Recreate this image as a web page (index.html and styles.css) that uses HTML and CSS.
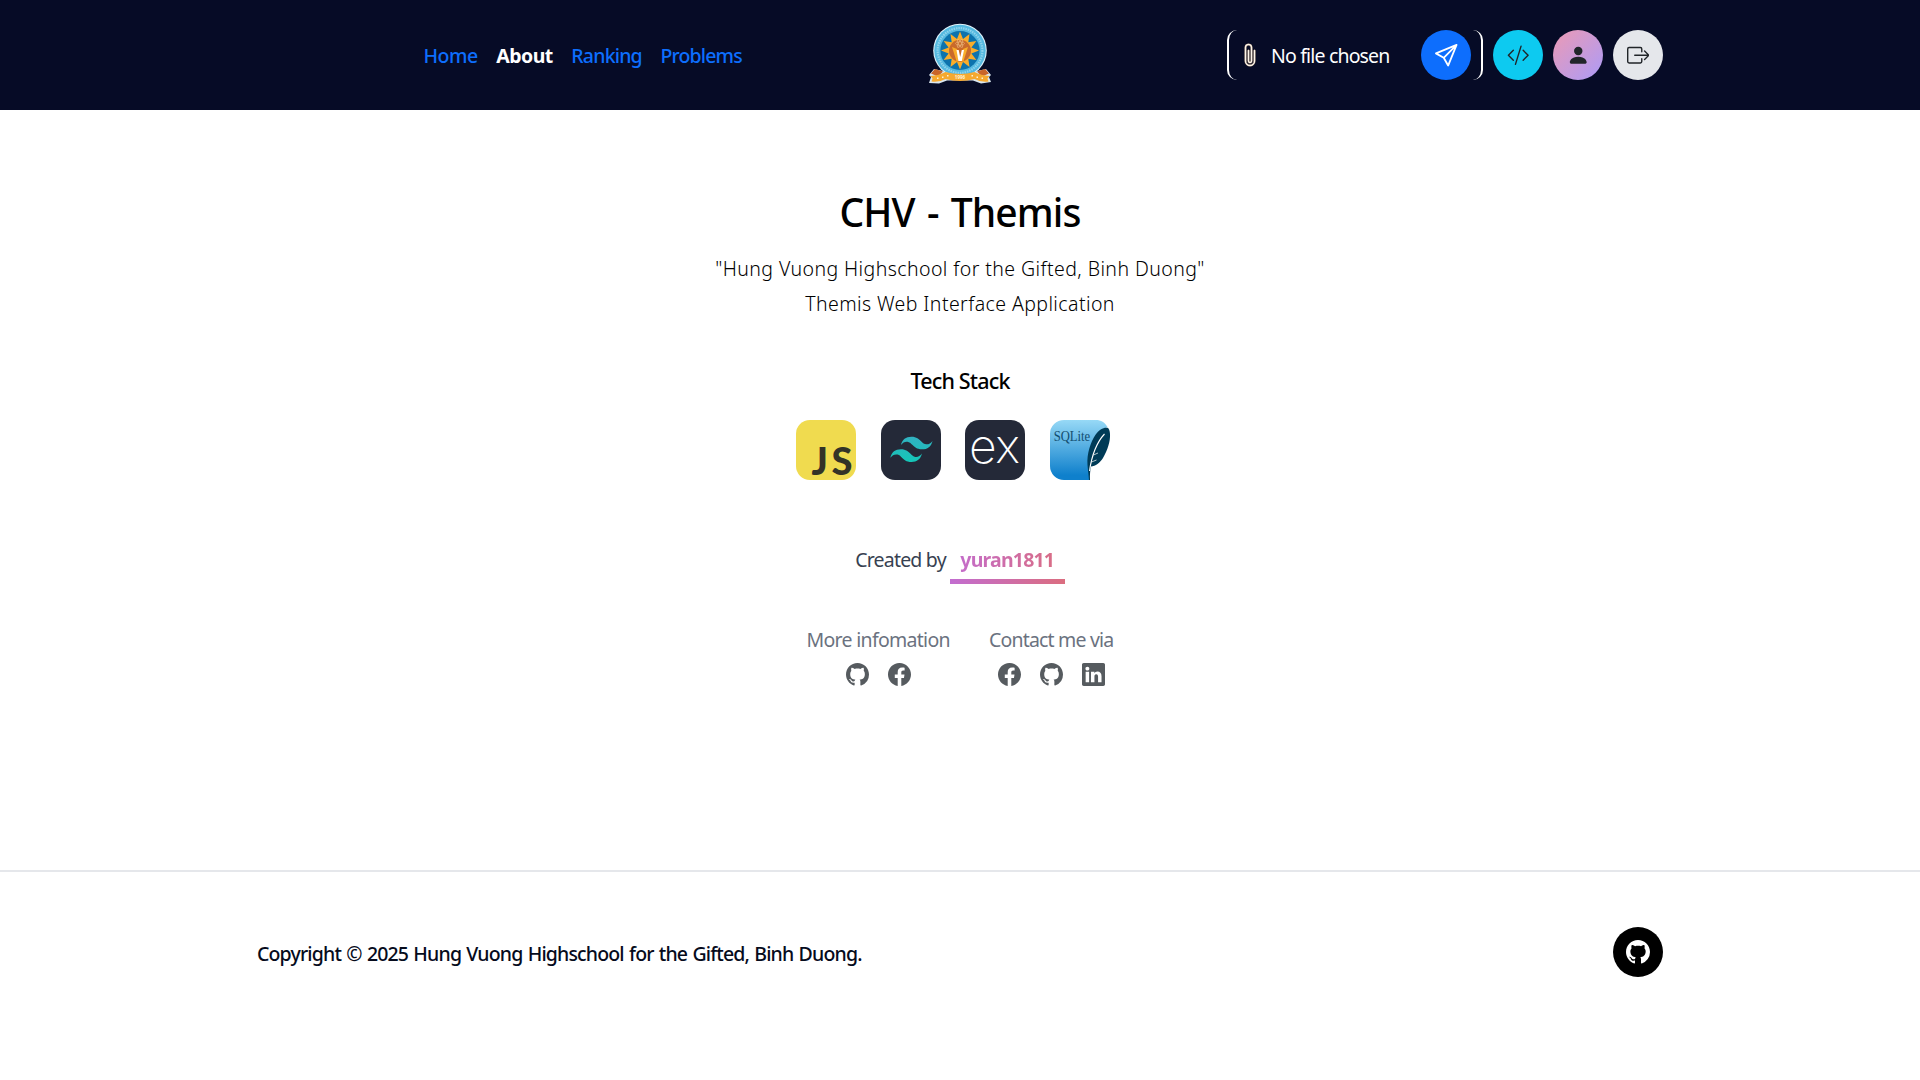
FILE: index.html
```html
<!DOCTYPE html>
<html lang="en">
<head>
<meta charset="utf-8">
<title>CHV - Themis</title>
<link rel="stylesheet" href="styles.css">
</head>
<body>
<svg class="sprite" aria-hidden="true">
  <symbol id="github" viewBox="0 0 16 16"><path d="M8 0C3.58 0 0 3.58 0 8c0 3.54 2.29 6.53 5.47 7.59.4.07.55-.17.55-.38 0-.19-.01-.82-.01-1.49-2.01.37-2.53-.49-2.69-.94-.09-.23-.48-.94-.82-1.13-.28-.15-.68-.52-.01-.53.63-.01 1.08.58 1.23.82.72 1.21 1.87.87 2.33.66.07-.52.28-.87.51-1.07-1.78-.2-3.64-.89-3.64-3.95 0-.87.31-1.59.82-2.15-.08-.2-.36-1.02.08-2.12 0 0 .67-.21 2.2.82.64-.18 1.32-.27 2-.27s1.36.09 2 .27c1.53-1.04 2.2-.82 2.2-.82.44 1.1.16 1.92.08 2.12.51.56.82 1.27.82 2.15 0 3.07-1.87 3.75-3.65 3.95.29.25.54.73.54 1.48 0 1.07-.01 1.93-.01 2.2 0 .21.15.46.55.38A8.01 8.01 0 0 0 16 8c0-4.42-3.58-8-8-8"/></symbol>
  <symbol id="facebook" viewBox="0 0 16 16"><path d="M16 8.049c0-4.446-3.582-8.05-8-8.05C3.58 0-.002 3.603-.002 8.05c0 4.017 2.926 7.347 6.75 7.951v-5.625h-2.03V8.05H6.75V6.275c0-2.017 1.195-3.131 3.022-3.131.876 0 1.791.157 1.791.157v1.98h-1.009c-.993 0-1.303.621-1.303 1.258v1.51h2.218l-.354 2.326H9.25V16c3.824-.604 6.75-3.934 6.75-7.951"/></symbol>
  <symbol id="linkedin" viewBox="0 0 16 16"><path d="M0 1.146C0 .513.526 0 1.175 0h13.65C15.474 0 16 .513 16 1.146v13.708c0 .633-.526 1.146-1.175 1.146H1.175C.526 16 0 15.487 0 14.854zm4.943 12.248V6.169H2.542v7.225zm-1.2-8.212c.837 0 1.358-.554 1.358-1.248-.015-.709-.52-1.248-1.342-1.248S2.4 3.226 2.4 3.934c0 .694.521 1.248 1.327 1.248zm4.908 8.212V9.359c0-.216.016-.432.08-.586.173-.431.568-.878 1.232-.878.869 0 1.216.662 1.216 1.634v3.865h2.401V9.25c0-2.22-1.184-3.252-2.764-3.252-1.274 0-1.845.7-2.165 1.193v.025h-.016l.016-.025V6.169h-2.4c.03.678 0 7.225 0 7.225z"/></symbol>
</svg>

<header class="header">
  <div class="container header-grid">
    <nav class="nav">
      <a class="home">Home</a>
      <a class="about">About</a>
      <a class="ranking">Ranking</a>
      <a class="problems">Problems</a>
    </nav>
    <svg class="logo" viewBox="0 0 64 62">
      <circle cx="32" cy="27.5" r="26.8" fill="#dff3fb"/>
      <circle cx="32" cy="27.5" r="25.7" fill="#55b9e0"/>
      <circle cx="32" cy="27.5" r="22.4" fill="none" stroke="#8fd3ec" stroke-width="2.2" stroke-dasharray="1.5 .9"/>
      <circle cx="32" cy="27.5" r="19.6" fill="#0d73ad"/>
      <path fill="#f9ad2b" d="M32 8.5l3 7.6 6.5-5-1.200 8.100 8.100-1.200-5 6.500 7.600 3-7.600 3 5 6.500-8.100-1.200 1.200 8.100-6.500-5-3 7.600-3-7.600-6.500 5 1.200-8.100-8.100 1.200 5-6.500-7.600-3 7.600-3-5-6.500 8.100 1.200-1.200-8.100 6.500 5z"/>
      <circle cx="32" cy="27.800" r="11" fill="#c96a2b"/>
      <g fill="none" stroke="#f2c98e" stroke-width=".5"><ellipse cx="32" cy="20.500" rx="4.500" ry="1.700"/><ellipse cx="32" cy="20.500" rx="4.500" ry="1.700" transform="rotate(60 32 20.500)"/><ellipse cx="32" cy="20.500" rx="4.500" ry="1.700" transform="rotate(-60 32 20.500)"/></g>
      <path fill="#f9ad2b" d="M24 24l5 2 1.500 12h-2zM40 24l-5 2-1.500 12h2z"/>
      <path fill="#fff" d="M28.500 27h2.200l1.500 7 1.600-7h2.200l-2.200 11h-3.400z"/>
      <path fill="#d9e6ee" d="M1 52l5-6 9 2 8 3.500h18l8-3.500 9-2 5 6-2 2 2 5-10 1.500-8-3H19l-8 3L1 60l2-6z"/>
      <path fill="#c9652a" d="M3 50.500l4-4.500 8 2.500-5 5zM61 50.500l-4-4.500-8 2.500 5 5z"/>
      <path fill="#f6a92f" d="M2.500 53q8.500-.5 15-4 14.500 4 29 0 6.500 3.500 15 4l-2 2.500 1 3q-8 1-14-2.500-14.500 4-29 0-6 3.500-14 2.500l1-3z"/>
      <text x="32" y="55.500" class="logo-year">1996</text>
      <path fill="#fff3d6" d="M9 54.500h1.500V56H9zM14 53.500h1.500V55H14zM19 52h1.500v1.500H19zM43.500 52H45v1.500h-1.500zM48.500 53.500H50V55h-1.500zM53.500 54.500H55V56h-1.500z"/>
    </svg>
    <div class="actions">
      <form class="upload">
        <svg class="clip" viewBox="0 0 16 16"><path d="M4.500 3a2.500 2.500 0 0 1 5 0v9a1.500 1.500 0 0 1-3 0V5a.5.5 0 0 1 1 0v7a.5.5 0 0 0 1 0V3a1.500 1.500 0 1 0-3 0v9a2.500 2.500 0 0 0 5 0V5a.5.5 0 0 1 1 0v7a3.500 3.500 0 1 1-7 0z"/></svg>
        <span class="file-name">No file chosen</span>
        <a class="round send"><svg viewBox="0 0 24 24"><path d="M23 1L1 10l8.300 4.700L14 23zM23 1L9.300 14.700"/></svg></a>
      </form>
      <a class="round code"><svg viewBox="0 0 16 16"><path d="M10.478 1.647a.5.5 0 1 0-.956-.294l-4 13a.5.5 0 0 0 .956.294zM4.854 4.146a.5.5 0 0 1 0 .708L1.707 8l3.147 3.146a.5.5 0 0 1-.708.708l-3.500-3.500a.5.5 0 0 1 0-.708l3.500-3.500a.5.5 0 0 1 .708 0m6.292 0a.5.5 0 0 0 0 .708L14.293 8l-3.147 3.146a.5.5 0 0 0 .708.708l3.500-3.500a.5.5 0 0 0 0-.708l-3.500-3.500a.5.5 0 0 0-.708 0"/></svg></a>
      <a class="round user"><svg viewBox="0 0 16 16"><path d="M3 14s-1 0-1-1 1-4 6-4 6 3 6 4-1 1-1 1zm5-6a3 3 0 1 0 0-6 3 3 0 0 0 0 6"/></svg></a>
      <a class="round logout"><svg viewBox="0 0 16 16"><path d="M10 12.500a.5.5 0 0 1-.5.5h-8a.5.5 0 0 1-.5-.5v-9a.5.5 0 0 1 .5-.5h8a.5.5 0 0 1 .5.5v2a.5.5 0 0 0 1 0v-2A1.500 1.500 0 0 0 9.500 2h-8A1.500 1.500 0 0 0 0 3.500v9A1.500 1.500 0 0 0 1.500 14h8a1.500 1.500 0 0 0 1.500-1.500v-2a.5.5 0 0 0-1 0z"/><path d="M15.854 8.354a.5.5 0 0 0 0-.708l-3-3a.5.5 0 0 0-.708.708L14.293 7.500H5.500a.5.5 0 0 0 0 1h8.793l-2.147 2.146a.5.5 0 0 0 .708.708z"/></svg></a>
    </div>
  </div>
</header>

<main class="main">
  <h1 class="title">CHV - Themis</h1>
  <p class="lead">"Hung Vuong Highschool for the Gifted, Binh Duong"<br>Themis Web Interface Application</p>
  <h2 class="subtitle">Tech Stack</h2>
  <div class="stack">
    <svg viewBox="0 0 60 60"><rect width="60" height="60" rx="14" fill="#f0db4f"/><text class="js" x="15.500" y="54.500" textLength="41">JS</text></svg>
    <svg viewBox="0 0 60 60"><rect width="60" height="60" rx="14" fill="#242938"/><g transform="translate(5.100 4) scale(2.110)"><path fill="url(#tw)" d="M12 6c-2.670 0-4.330 1.330-5 4 1-1.330 2.170-1.830 3.500-1.500.76.19 1.310.74 1.910 1.350.98 1 2.090 2.150 4.590 2.150 2.670 0 4.330-1.330 5-4-1 1.330-2.170 1.830-3.500 1.500-.76-.19-1.300-.74-1.910-1.350C15.610 7.150 14.500 6 12 6m-5 6c-2.670 0-4.330 1.330-5 4 1-1.330 2.170-1.830 3.500-1.500.76.19 1.300.74 1.910 1.350C8.390 16.850 9.500 18 12 18c2.670 0 4.330-1.330 5-4-1 1.330-2.170 1.830-3.500 1.500-.76-.19-1.300-.74-1.910-1.350C10.610 13.150 9.500 12 7 12"/></g><defs><linearGradient id="tw" x1="0" y1="0" x2="0" y2="1"><stop stop-color="#32b1c1"/><stop offset="1" stop-color="#14c6b7"/></linearGradient></defs></svg>
    <svg viewBox="0 0 60 60"><rect width="60" height="60" rx="14" fill="#242938"/><text class="ex" x="4" y="42.500" textLength="51">ex</text></svg>
    <svg viewBox="0 0 60 60"><defs><linearGradient id="sq" x1="0" y1="0" x2="0" y2="1"><stop stop-color="#97d9f6"/><stop offset=".92" stop-color="#0f80cc"/><stop offset="1" stop-color="#0f80cc"/></linearGradient></defs><path fill="url(#sq)" d="M14 0h32c5 0 9 2.500 11.500 7C46 13 37 36 39.500 60H14A14 14 0 0 1 0 46V14A14 14 0 0 1 14 0z"/><path fill="#003b57" d="M57.500 7.800c-3.500-.8-8.500 1.800-12 7-5 7.500-8.800 19-8 30.200L39 60h1c-.2-5 .1-9.500 1-13.500 4.500-.5 9-3.500 12-8.500 4.500-7.500 7.500-17 7-24-.2-3-.9-5.800-2.500-6.200z"/><path fill="none" stroke="#fff" stroke-width="1.100" d="M54.500 14C47 22 42 34 39.500 51"/><path fill="none" stroke="#fff" stroke-width=".7" d="M43.500 35l4.500-2M41.500 42l5-2"/><text class="sqlite" x="3.700" y="21" textLength="36.500" lengthAdjust="spacingAndGlyphs">SQLite</text></svg>
  </div>
  <p class="author"><span>Created by</span> <a>yuran1811</a></p>
  <div class="links">
    <section>
      <h3 class="more">More infomation</h3>
      <div class="icons"><svg><use href="#github"/></svg><svg><use href="#facebook"/></svg></div>
    </section>
    <section>
      <h3 class="contact">Contact me via</h3>
      <div class="icons"><svg><use href="#facebook"/></svg><svg><use href="#github"/></svg><svg><use href="#linkedin"/></svg></div>
    </section>
  </div>
</main>

<footer class="footer">
  <div class="container footer-row">
    <p class="copyright">Copyright © 2025 Hung Vuong Highschool for the Gifted, Binh Duong.</p>
    <a class="round repo"><svg><use href="#github"/></svg></a>
  </div>
</footer>
</body>
</html>
```
FILE: styles.css
```css
* { box-sizing: border-box; margin: 0; padding: 0; }
body { font-family: "Noto Sans", "Open Sans", sans-serif; font-size: 19.5px; line-height: 30px; background: #fff; color: #000; overflow: hidden; }
svg { display: block; }
.sprite { display: none; }
.container { width: 1406px; margin: 0 auto; }

.header { height: 110px; background: #060b26; }
.header-grid { height: 110px; display: grid; grid-template-columns: 1fr 64px 1fr; align-items: center; }
.nav { display: flex; gap: 18.500px; padding: 2px 0 0 166.500px; font-weight: 500; color: #0d6efd; }
.home { letter-spacing: -.5px; }
.about { color: #fff; font-weight: 700; letter-spacing: -.5px; }
.ranking { letter-spacing: -.8px; }
.problems { letter-spacing: -.85px; }
.logo { width: 64px; height: 62px; margin-top: -3px; }
.logo-year { font-size: 4.500px; font-weight: 700; fill: #fff3d6; text-anchor: middle; }

.actions { display: flex; justify-content: flex-end; gap: 10px; }
.upload { display: flex; align-items: center; width: 256px; height: 50px; padding: 0 10px 0 8px; border: solid #fff; border-width: 0 2.500px; border-radius: 10px; color: #fff; }
.clip { width: 24px; height: 24px; fill: #fff; stroke: #f0c48a; stroke-width: .25; margin-left: 1px; }
.file-name { flex: 1; padding: 2px 0 0 9px; letter-spacing: -.83px; white-space: nowrap; }
.round { width: 50px; height: 50px; border-radius: 50%; display: flex; align-items: center; justify-content: center; }
.round svg { width: 22.500px; height: 22.500px; fill: #212529; }
.round.send { background: #0d6efd; }
.round.send svg { fill: none; stroke: #fff; stroke-width: 1.900; stroke-linejoin: round; overflow: visible; }
.code { background: #0dcaf0; }
.user { background: linear-gradient(135deg, #ec9ab4, #ab9bf8); }
.logout { background: #e5e7eb; }

.main { height: 760px; padding-top: 76px; display: flex; flex-direction: column; align-items: center; }
.title { font-size: 39px; font-weight: 500; line-height: 50px; letter-spacing: -.9px; word-spacing: 3px; padding-top: 1px; height: 50px; }
.lead { margin-top: 15px; font-weight: 300; line-height: 35px; letter-spacing: .42px; text-align: center; }
.subtitle { margin-top: 45px; font-size: 21.500px; font-weight: 500; letter-spacing: -.83px; }
.stack { display: flex; gap: 24.600px; margin: 24px 14px 0 0; }
.stack svg { width: 60px; height: 60px; overflow: visible; }
.js { font: 900 38px Lato, sans-serif; fill: #333327; }
.ex { font: 200 48px Inter, sans-serif; fill: #fff; }
.sqlite { font: 14.500px "Liberation Serif", serif; fill: #124d70; }
.author { margin-top: 64px; display: flex; gap: 4px; color: #374151; letter-spacing: -.8px; }
.author span { padding-top: 1px; }
.author a { position: relative; width: 115px; height: 40px; padding-top: 1px; text-align: center; font-weight: 700; color: transparent; background: linear-gradient(90deg, #c26dd0, #db6d7f); background-clip: text; -webkit-background-clip: text; }
.author a::after { content: ""; position: absolute; left: 0; right: 0; bottom: 0; height: 5px; background: linear-gradient(90deg, #c26dd0, #db6d7f); }
.links { display: flex; gap: 39px; margin-top: 41px; color: #6b7280; }
.links h3 { font-size: 19.500px; font-weight: 400; }
.more { letter-spacing: -.7px; }
.contact { letter-spacing: -.8px; }
.icons { display: flex; justify-content: center; gap: 19px; margin-top: 8px; }
.icons svg { width: 23px; height: 23px; fill: #565b5f; }

.footer { border-top: 2px solid #e5e7eb; padding-top: 55px; }
.footer-row { display: flex; justify-content: space-between; align-items: center; }
.copyright { font-weight: 500; letter-spacing: -.84px; word-spacing: 1px; color: #060b1c; margin-top: 3px; }
.repo { background: #000; }
.round.repo svg { width: 24px; height: 24px; fill: #fff; }
```
